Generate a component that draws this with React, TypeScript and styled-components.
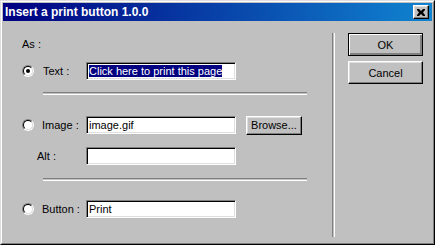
import React from "react";
import styled, { createGlobalStyle } from "styled-components";

const Global = createGlobalStyle`
  html, body { margin: 0; padding: 0; background: #c0c0c0; }
  body { font-family: "Liberation Sans", Arial, sans-serif; font-size: 11px; color: #000; }
`;

const Window = styled.div`
  box-sizing: border-box;
  width: 435px;
  height: 245px;
  background: #c0c0c0;
  border: 1px solid;
  border-color: #dfdfdf #000 #000 #dfdfdf;
  display: flex;
  flex-direction: column;
`;

const Inner = styled.div`
  flex: 1;
  display: flex;
  flex-direction: column;
  border: 1px solid;
  border-color: #fff #808080 #808080 #fff;
  padding: 1px;
  min-height: 0;
`;

const TitleBar = styled.div`
  height: 18px;
  display: flex;
  align-items: center;
  justify-content: space-between;
  padding: 0 3px 0 2px;
  background: linear-gradient(to right, #000080, #1084d0);
  color: #fff;
  font-weight: bold;
  font-size: 12px;
`;

const CloseButton = styled.div`
  box-sizing: border-box;
  width: 16px;
  height: 14px;
  background: #c0c0c0;
  border: 1px solid;
  border-color: #fff #000 #000 #fff;
  box-shadow: inset -1px -1px 0 #808080, inset 1px 1px 0 #dfdfdf;
  display: flex;
  align-items: center;
  justify-content: center;
`;

const Body = styled.div`
  flex: 1;
  display: flex;
`;

const LeftPanel = styled.div`
  width: 310px;
  padding: 17px 0 0 19px;
  display: flex;
  flex-direction: column;
`;

const AsLabel = styled.div`
  height: 13px;
  line-height: 13px;
`;

const Row = styled.div<{ $mt: number }>`
  display: flex;
  align-items: center;
  height: 18px;
  margin-top: ${(p) => p.$mt}px;
`;

const RadioOuter = styled.span`
  box-sizing: border-box;
  width: 12px;
  height: 12px;
  border-radius: 50%;
  border: 1px solid;
  border-color: #808080 #fff #fff #808080;
  display: flex;
  flex-shrink: 0;
`;

const RadioInner = styled.span`
  box-sizing: border-box;
  flex: 1;
  border-radius: 50%;
  border: 1px solid;
  border-color: #000 #dfdfdf #dfdfdf #000;
  background: #fff;
  display: flex;
  align-items: center;
  justify-content: center;
`;

const Dot = styled.span`
  width: 4px;
  height: 4px;
  border-radius: 50%;
  background: #000;
`;

const Label = styled.span<{ $indent: number; $width: number }>`
  margin-left: ${(p) => p.$indent}px;
  width: ${(p) => p.$width}px;
  flex-shrink: 0;
  white-space: nowrap;
`;

const Field = styled.div`
  box-sizing: border-box;
  width: 150px;
  height: 18px;
  background: #fff;
  border: 1px solid;
  border-color: #808080 #fff #fff #808080;
  box-shadow: inset 1px 1px 0 #000, inset -1px -1px 0 #dfdfdf;
  padding: 1px 2px 0 2px;
  line-height: 14px;
  white-space: nowrap;
  overflow: hidden;
`;

const Selected = styled.span`
  background: #000080;
  color: #fff;
`;

const Separator = styled.div<{ $mt: number }>`
  margin: ${(p) => p.$mt}px 0 0 21px;
  width: 264px;
  height: 1px;
  border-top: 1px solid #808080;
  border-bottom: 1px solid #fff;
`;

const Button = styled.div<{ $default?: boolean; $w: number; $h: number }>`
  box-sizing: border-box;
  width: ${(p) => p.$w}px;
  height: ${(p) => p.$h}px;
  display: flex;
  align-items: center;
  justify-content: center;
  background: #c0c0c0;
  border: 1px solid;
  border-color: ${(p) => (p.$default ? "#000" : "#fff #000 #000 #fff")};
  box-shadow: ${(p) =>
    p.$default
      ? "inset 1px 1px 0 #fff, inset -1px -1px 0 #808080, inset -2px -2px 0 #808080"
      : "inset -1px -1px 0 #808080, inset 1px 1px 0 #dfdfdf"};
  flex-shrink: 0;
`;

const BrowseWrap = styled.div`
  margin-left: 10px;
`;

const VSep = styled.div`
  margin: 12px 0 5px 0;
  width: 1px;
  border-left: 1px solid #808080;
  border-right: 1px solid #fff;
`;

const RightPanel = styled.div`
  padding: 12px 0 0 13px;
  display: flex;
  flex-direction: column;
  gap: 5px;
`;

const Radio = ({ checked }: { checked?: boolean }) => (
  <RadioOuter>
    <RadioInner>{checked && <Dot />}</RadioInner>
  </RadioOuter>
);

export default function App() {
  return (
    <>
      <Global />
      <Window>
        <Inner>
          <TitleBar>
            <span>Insert a print button 1.0.0</span>
            <CloseButton>
              <svg width="8" height="7" viewBox="0 0 8 7">
                <path d="M0 0h2l2 2 2-2h2v1l-2 2.5 2 2.5v1h-2l-2-2-2 2h-2v-1l2-2.5-2-2.5z" fill="#000" />
              </svg>
            </CloseButton>
          </TitleBar>
          <Body>
            <LeftPanel>
              <AsLabel>As :</AsLabel>
              <Row $mt={11}>
                <Radio checked />
                <Label $indent={9} $width={43}>Text :</Label>
                <Field>
                  <Selected>Click here to print this page</Selected>
                </Field>
              </Row>
              <Separator $mt={12} />
              <Row $mt={21}>
                <Radio />
                <Label $indent={8} $width={44}>Image :</Label>
                <Field>image.gif</Field>
                <BrowseWrap>
                  <Button $w={56} $h={19}>Browse...</Button>
                </BrowseWrap>
              </Row>
              <Row $mt={13}>
                <Label $indent={15} $width={49}>Alt :</Label>
                <Field />
              </Row>
              <Separator $mt={13} />
              <Row $mt={19}>
                <Radio />
                <Label $indent={8} $width={44}>Button :</Label>
                <Field>Print</Field>
              </Row>
            </LeftPanel>
            <VSep />
            <RightPanel>
              <Button $default $w={75} $h={23}>OK</Button>
              <Button $w={75} $h={23}>Cancel</Button>
            </RightPanel>
          </Body>
        </Inner>
      </Window>
    </>
  );
}
